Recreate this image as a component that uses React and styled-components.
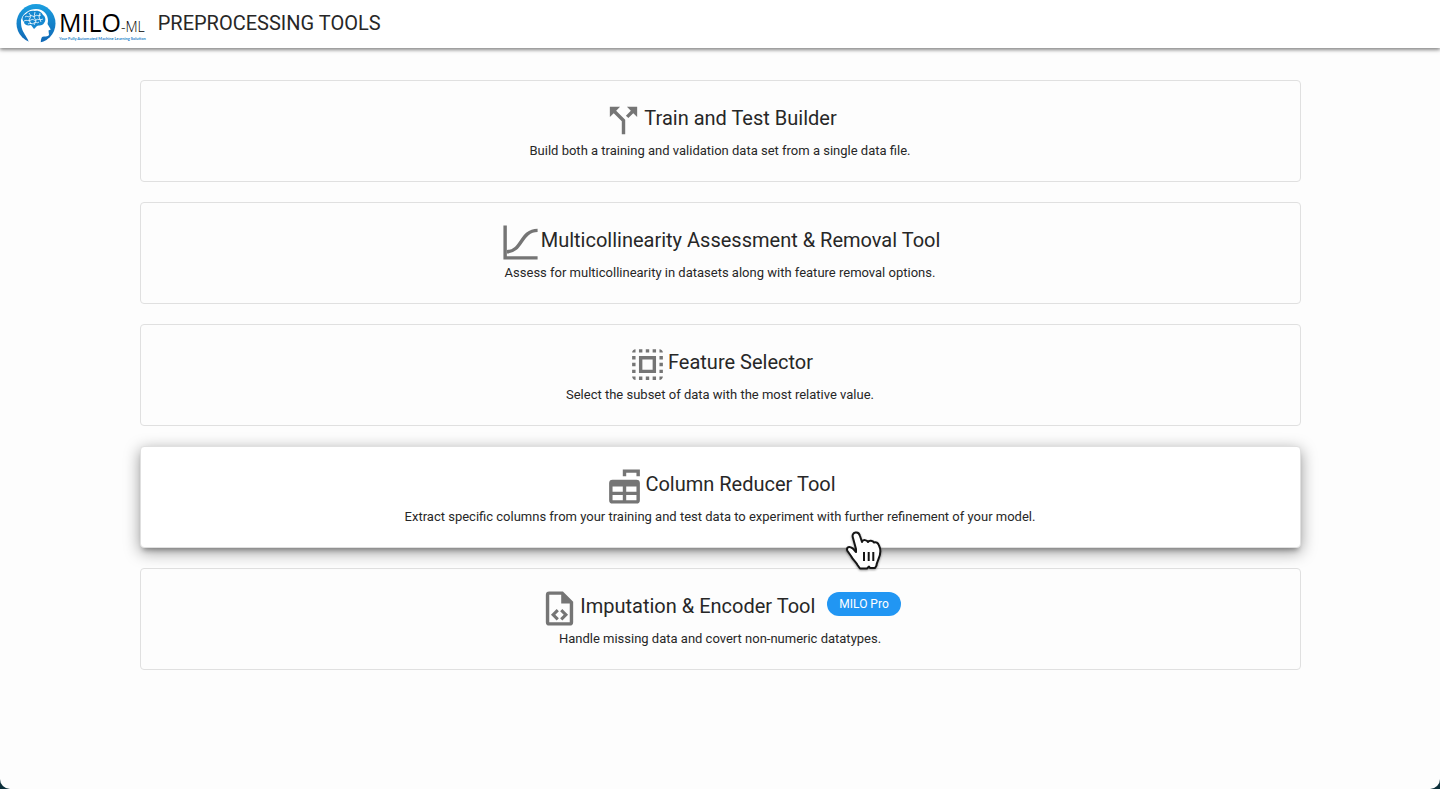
import React from 'react';
import styled, { createGlobalStyle } from 'styled-components';
import { MdCallSplit, MdSelectAll } from 'react-icons/md';

const color = {
   page: '#fdfdfd',
   desktop: '#0c2f3a',
   text: '#272727',
   icon: '#757575',
   border: '#e0e0e0',
   brand: '#1a80c9',
   badge: '#2196f3',
};

const GlobalStyle = createGlobalStyle`
   * {
      box-sizing: border-box;
   }

   body {
      margin: 0;
      background: ${color.desktop};
      color: ${color.text};
      font-family: Roboto, 'Liberation Sans', sans-serif;
   }
`;

const Page = styled.div`
   min-height: 100vh;
   background: ${color.page};
   border-radius: 0 0 10px 10px;
`;

const Header = styled.header`
   display: flex;
   align-items: center;
   gap: 12px;
   height: 48px;
   padding: 0 16px;
   background: white;
   box-shadow: 0 1px 5px rgba(0, 0, 0, 0.35), 0 2px 3px rgba(0, 0, 0, 0.25);
`;

const Brand = styled.a`
   display: flex;
   gap: 2px;
   color: black;
   text-decoration: none;
`;

const BrandText = styled.span`
   display: flex;
   flex-direction: column;
   padding-top: 5px;
   font-family: 'Open Sans', 'Noto Sans', sans-serif;
   white-space: nowrap;
`;

const BrandName = styled.span`
   font-size: 25px;
   font-weight: 400;
   line-height: 26px;
`;

const BrandSuffix = styled.span`
   font-size: 14px;
   font-weight: 300;
   line-height: 14px;
`;

const Tagline = styled.span`
   color: ${color.brand};
   font-family: Lato, sans-serif;
   font-size: 4px;
   font-weight: 700;
   line-height: 7px;
`;

const PageTitle = styled.h1`
   margin: 0;
   font-size: 20px;
   font-weight: 400;
   line-height: 46px;
   align-self: flex-start;
`;

const Tools = styled.main`
   display: flex;
   flex-direction: column;
   gap: 20px;
   max-width: 1201px;
   margin: 0 auto;
   padding: 32px 20px;
`;

const Card = styled.a`
   position: relative;
   z-index: ${props => (props.$raised ? 1 : 0)};
   display: flex;
   flex-direction: column;
   align-items: center;
   padding: 19px 16px 20px;
   border: 1px solid ${color.border};
   border-radius: 4px;
   background: ${props => (props.$raised ? 'white' : color.page)};
   box-shadow: ${props =>
      props.$raised
         ? '0 5px 5px -3px rgba(0, 0, 0, 0.3), 0 4px 16px rgba(0, 0, 0, 0.4)'
         : 'none'};
   color: inherit;
   text-decoration: none;
   cursor: pointer;
`;

const Heading = styled.div`
   display: flex;
   align-items: flex-start;

   > svg {
      flex: none;
      width: 41px;
      height: 41px;
      color: ${color.icon};
   }
`;

const Title = styled.h2`
   margin: 0;
   font-size: 20px;
   font-weight: 400;
   line-height: 36px;
`;

const Badge = styled.span`
   margin: 4px 0 0 12px;
   padding: 0 12px;
   border-radius: 12px;
   background: ${color.badge};
   color: white;
   font-size: 12px;
   line-height: 24px;
`;

const Description = styled.p`
   margin: 0;
   font-size: 13px;
   line-height: 20px;
   text-align: center;
`;

const Pointer = styled.svg`
   position: absolute;
   left: 702px;
   top: 84px;
   width: 42px;
   height: 42px;
   overflow: visible;
   filter: drop-shadow(0 1px 1px rgba(0, 0, 0, 0.4));
`;

const CurveIcon = () => (
   <svg viewBox="0 0 24 24" aria-hidden="true">
      <path d="M2 2h2v18h18v2H2z" fill="currentColor" />
      <path
         d="M4 17.4C13 17.4 12 4.9 22 4.9"
         fill="none"
         stroke="currentColor"
         strokeWidth="2"
      />
   </svg>
);

const ColumnsIcon = () => (
   <svg viewBox="0 0 24 24" fill="currentColor" aria-hidden="true">
      <path d="M11 2h10v4h-2V4h-6v2h-2z" />
      <path
         fillRule="evenodd"
         d="M5 8h14a2 2 0 0 1 2 2v10a2 2 0 0 1-2 2H5a2 2 0 0 1-2-2V10a2 2 0 0 1 2-2zM5 12v3h6v-3zM13 12v3h6v-3zM5 17v3h6v-3zM13 17v3h6v-3z"
      />
   </svg>
);

const FileCodeIcon = () => (
   <svg viewBox="0 0 24 24" fill="currentColor" aria-hidden="true">
      <path d="M14 2H6a2 2 0 0 0-2 2v16a2 2 0 0 0 2 2h12a2 2 0 0 0 2-2V8l-6-6m4 18H6V4h7v5h5v11m-8.460-4.350l2.090 2.090L10.350 19 7 15.650l3.350-3.350 1.280 1.260-2.090 2.090m7.460 0L13.650 19l-1.270-1.260 2.090-2.090-2.090-2.090 1.270-1.260L17 15.650z" />
   </svg>
);

const LogoMark = () => (
   <svg width="41" height="40" viewBox="0 0 41 40" aria-hidden="true">
      <defs>
         <linearGradient id="mark" x1="0" y1="0" x2="0" y2="1">
            <stop offset="0" stopColor="#1b9fe0" />
            <stop offset="1" stopColor="#0f66b4" />
         </linearGradient>
      </defs>
      <circle cx="20" cy="19.500" r="19.500" fill="url(#mark)" />
      <path
         d="M13 40C13 36 10 33 8 29 5 24 5 20 5 16 7 9 13 5 20 5c8 0 12 6 12 12l-.5 3 3.300 5.500-2.300 1 .5 4.500c-1 2-5 1-7 2-1 2-1.500 4-1 7z"
         fill="white"
      />
      <path
         d="M8 18c-3-3-1-7 2-8 2-3 6-4 9-3 4-1 7 2 8 4 3 2 3 6 1 8-1 3-5 2-7 3l-3 3-3-4c-3 1-7 0-7-3z"
         fill="#1688d0"
      />
      <path
         d="M9 13c2-2 3 1 5-1s3 2 5 0 3 1 6-1M8 17c3-2 4 1 7-1s3 2 5 0 4 1 7-1M12 20c2-2 4 1 6-1s3 1 5-1M13 9l2 3-2 4 2 4M19 8l-1 5 2 4-2 4M24 9l-1 4 2 5"
         fill="none"
         stroke="white"
         strokeWidth="0.8"
      />
   </svg>
);

const HandPointer = () => (
   <Pointer viewBox="0 0 42 42" aria-hidden="true">
      <path
         d="M13 18L10 7C9 4 10 2 12.500 1.500 15 1 16.500 3 17 5l2 6c1-3 5-2 6 0 1-2 5-1.500 6 .5 2-1 4 .5 5 3 2 4 1.500 9-.5 13.500-1 3-2 4-2 6.500L32 37H27l-1-1.500L24 37.500H17L14.500 34C13 31 10 29 8 25L4.500 20c-1.500-3 1-5 3.500-3.500 2 .5 3.500 3 5 4.500z"
         fill="white"
         stroke="#151515"
         strokeWidth="2"
         strokeLinejoin="round"
      />
      <path
         d="M21 21v9M25.700 21v9M30.300 21v9"
         fill="none"
         stroke="#151515"
         strokeWidth="2"
      />
   </Pointer>
);

const tools = [
   {
      id: 'train-test',
      Icon: MdCallSplit,
      title: 'Train and Test Builder',
      description:
         'Build both a training and validation data set from a single data file.',
   },
   {
      id: 'multicollinearity',
      Icon: CurveIcon,
      title: 'Multicollinearity Assessment & Removal Tool',
      description:
         'Assess for multicollinearity in datasets along with feature removal options.',
   },
   {
      id: 'feature-selector',
      Icon: MdSelectAll,
      title: 'Feature Selector',
      description: 'Select the subset of data with the most relative value.',
   },
   {
      id: 'column-reducer',
      Icon: ColumnsIcon,
      title: 'Column Reducer Tool',
      description:
         'Extract specific columns from your training and test data to experiment with further refinement of your model.',
      active: true,
   },
   {
      id: 'encoder',
      Icon: FileCodeIcon,
      title: 'Imputation & Encoder Tool',
      description: 'Handle missing data and covert non-numeric datatypes.',
      badge: 'MILO Pro',
   },
];

const App = () => (
   <Page>
      <GlobalStyle />
      <Header>
         <Brand href="#home">
            <LogoMark />
            <BrandText>
               <BrandName>
                  MILO<BrandSuffix>-ML</BrandSuffix>
               </BrandName>
               <Tagline>Your Fully Automated Machine Learning Solution</Tagline>
            </BrandText>
         </Brand>
         <PageTitle>PREPROCESSING TOOLS</PageTitle>
      </Header>
      <Tools>
         {tools.map(({ id, Icon, title, description, badge, active }) => (
            <Card key={id} href={`#${id}`} $raised={active}>
               <Heading>
                  <Icon />
                  <Title>{title}</Title>
                  {badge && <Badge>{badge}</Badge>}
               </Heading>
               <Description>{description}</Description>
               {active && <HandPointer />}
            </Card>
         ))}
      </Tools>
   </Page>
);

export default App;
